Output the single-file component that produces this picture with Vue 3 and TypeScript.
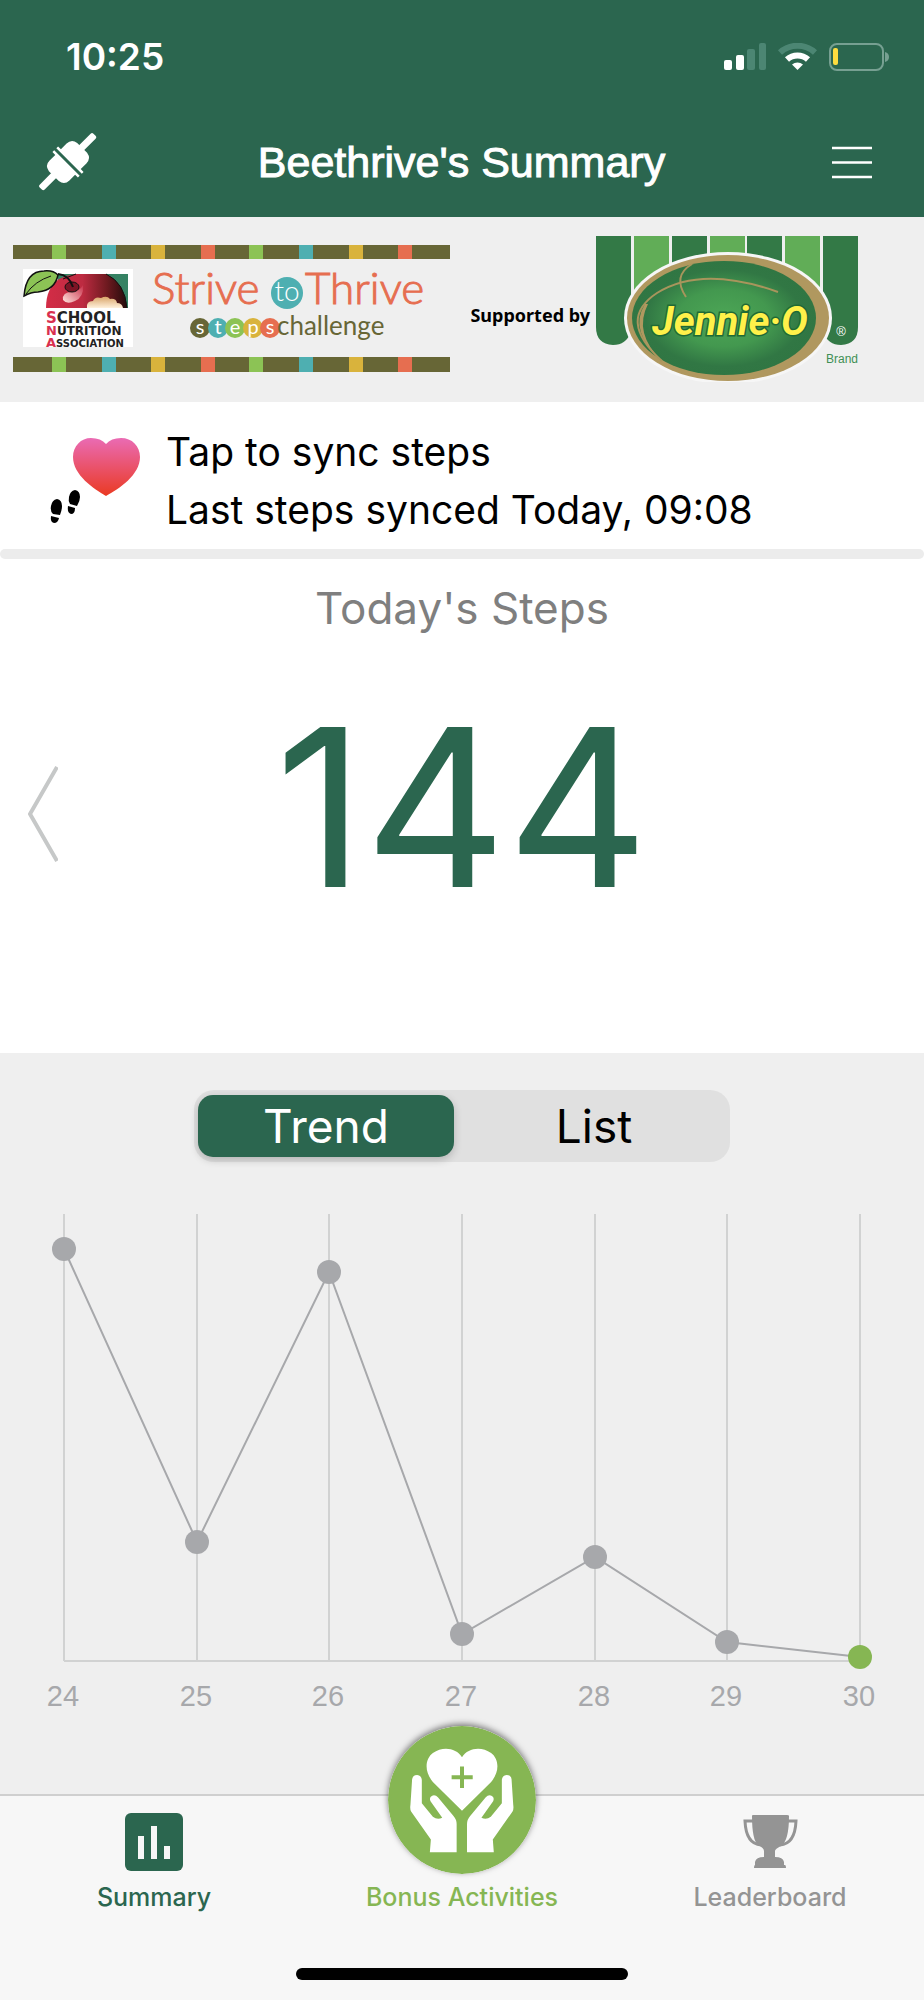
<script setup lang="ts">
import { computed, ref } from 'vue'

interface Day {
  label: string
  level: number
}

const view = ref<'trend' | 'list'>('trend')

const days: Day[] = [
  { label: '24', level: 412 },
  { label: '25', level: 119 },
  { label: '26', level: 389 },
  { label: '27', level: 27 },
  { label: '28', level: 104 },
  { label: '29', level: 19 },
  { label: '30', level: 4 },
]

const axisY = 461
const points = computed(() =>
  days.map((d, i) => ({
    label: d.label,
    x: 64 + Math.round((i * 796) / (days.length - 1)),
    y: axisY - d.level,
    today: i === days.length - 1,
  })),
)
const trendLine = computed(() => points.value.map((p) => `${p.x},${p.y}`).join(' '))

const stripes = [
  { x: 39, color: '#8cc355' },
  { x: 89, color: '#4eafb1' },
  { x: 138, color: '#d9b33c' },
  { x: 188, color: '#e66e50' },
  { x: 236, color: '#8cc355' },
  { x: 286, color: '#4eafb1' },
  { x: 336, color: '#d9b33c' },
  { x: 385, color: '#e66e50' },
]

const stepLetters = [
  { c: 's', x: 187, color: '#676636' },
  { c: 't', x: 205, color: '#4eafb1' },
  { c: 'e', x: 222, color: '#8cc355' },
  { c: 'p', x: 240, color: '#d9b33c' },
  { c: 's', x: 257, color: '#e66e50' },
]

const awning = [38, 76, 114, 151, 189]
</script>

<template>
  <div class="page">
    <header class="header">
      <div class="status">
        <span class="time">10:25</span>
        <svg class="status-icons" viewBox="0 0 166 28" role="img" aria-label="Signal, Wi-Fi, battery">
          <rect x="0" y="17" width="8" height="10" rx="2" fill="#fff" />
          <rect x="12" y="12" width="8" height="15" rx="2" fill="#fff" />
          <rect x="23" y="6" width="8" height="21" rx="2" fill="#4c8673" />
          <rect x="35" y="0" width="7" height="27" rx="2" fill="#4c8673" />
          <path d="M56 9.500a26 26 0 0 1 35 0" fill="none" stroke="#4c8673" stroke-width="6" />
          <path d="M63 16.500a15.500 15.500 0 0 1 21 0" fill="none" stroke="#fff" stroke-width="6" />
          <path d="M73.500 27l-5.500-5.500a8.500 8.500 0 0 1 11 0z" fill="#fff" />
          <rect x="106" y="1" width="53" height="26" rx="7" fill="none" stroke="#77a092" stroke-width="2" />
          <rect x="109" y="5" width="5" height="17" rx="2" fill="#fddc3f" />
          <path d="M161 9q4 1 4 5t-4 5z" fill="#77a092" />
        </svg>
      </div>
      <div class="title-row">
        <button class="icon-button" type="button" aria-label="Connections">
          <svg class="plug" viewBox="0 0 58 58">
            <g transform="rotate(45 29 29)" fill="#fff">
              <rect x="25" y="-9" width="7" height="20" rx="2" />
              <rect x="25" y="47" width="7" height="20" rx="2" />
              <path d="M15 25V17q0-7 7-8h14q7 1 7 8v8h4v2.500H11V25z" />
              <path d="M11 30.500h36V33h-4v8q0 7-7 8H22q-7-1-7-8v-8h-4z" />
            </g>
          </svg>
        </button>
        <h1 class="title">Beethrive's Summary</h1>
        <button class="icon-button end" type="button" aria-label="Menu">
          <svg class="menu" viewBox="0 0 40 34">
            <path d="M0 3h40M0 17.500h40M0 32h40" stroke="#fff" stroke-width="2.500" />
          </svg>
        </button>
      </div>
    </header>

    <section class="banner" aria-label="Sponsors">
      <svg class="strive" viewBox="0 0 437 128">
        <defs>
          <linearGradient id="apple" x1="0" x2="1">
            <stop offset="0" stop-color="#d32c46" />
            <stop offset=".45" stop-color="#bd2b41" />
            <stop offset=".75" stop-color="#6f1a20" />
            <stop offset="1" stop-color="#240c0c" />
          </linearGradient>
          <linearGradient id="shine" x1="1" y1="0" x2="0" y2="1">
            <stop offset="0" stop-color="#c8304a" />
            <stop offset="1" stop-color="#ffe3dd" />
          </linearGradient>
          <linearGradient id="bite" x1="0" y1="0" x2="0" y2="1">
            <stop offset="0" stop-color="#d9a468" />
            <stop offset="1" stop-color="#fff1dc" />
          </linearGradient>
        </defs>
        <rect width="437" height="14" fill="#676636" />
        <rect y="112" width="437" height="15" fill="#676636" />
        <g v-for="s in stripes" :key="s.x" :fill="s.color">
          <rect :x="s.x" width="14" height="14" />
          <rect :x="s.x" y="112" width="14" height="15" />
        </g>
        <rect x="10" y="24" width="110" height="78" fill="#fff" />
        <rect x="45" y="29" width="70" height="34" fill="#358263" />
        <path d="M33 63q0-20 13-29q8-4 17-5h30q19 9 21 34z" fill="url(#apple)" />
        <path d="M50 34l13-5M93 29q19 9 21 34" fill="none" stroke="#111" stroke-width="1" />
        <path d="M50 55q-1-8 9-8q8-1 11-7q1 12-8 16q-8 4-12-1z" fill="url(#shine)" />
        <ellipse cx="59" cy="42" rx="7" ry="5" fill="#7c1425" stroke="#111" stroke-width="1" />
        <path d="M45 29q11 1 15 13" fill="none" stroke="#111" stroke-width="2" />
        <path d="M74 63q-1-7 6-7q2-5 8-3q6-3 9 1q6-1 7 4q5 0 6 5z" fill="url(#bite)" />
        <path d="M11 51q2-25 20-25q9-1 14 4q-3 15-20 17q-7 0-14 4z" fill="#8cc355" stroke="#111" stroke-width="1.500" />
        <path d="M13 49q9-13 25-18" fill="none" stroke="#111" stroke-width="1" />
        <g class="sna">
          <text x="33" y="78" font-size="15"><tspan class="initial">S</tspan>CHOOL</text>
          <text x="33" y="90" font-size="12"><tspan class="initial" font-size="13">N</tspan>UTRITION</text>
          <text x="33" y="102" font-size="10"><tspan class="initial" font-size="13">A</tspan>SSOCIATION</text>
        </g>
        <text class="light" x="139" y="59" font-size="44">Strive</text>
        <text class="light" x="292" y="59" font-size="44">Thrive</text>
        <circle cx="274" cy="48" r="16" fill="#4eafb1" />
        <text class="to" x="274" y="56">to</text>
        <circle v-for="s in stepLetters" :key="s.x" :cx="s.x" cy="83" r="10" :fill="s.color" />
        <text v-for="s in stepLetters" :key="s.x + s.c" class="step-letter" :x="s.x" y="89">{{ s.c }}</text>
        <text class="challenge" x="264" y="90">challenge</text>
      </svg>
      <span class="supported">Supported by</span>
      <svg class="jennie" viewBox="0 0 263 146">
        <defs>
          <radialGradient id="field">
            <stop offset="0" stop-color="#4da656" />
            <stop offset=".5" stop-color="#43984f" />
            <stop offset=".85" stop-color="#317744" />
            <stop offset="1" stop-color="#307643" />
          </radialGradient>
        </defs>
        <path d="M0 0h35v96q-5 13-18 13q-17-1-17-18z" fill="#337946" />
        <path d="M227 0h35v91q0 17-17 18q-13 0-18-13z" fill="#337946" />
        <rect
          v-for="(x, i) in awning"
          :key="x"
          :x="x"
          width="35"
          height="60"
          :fill="i % 2 ? '#337946' : '#61ad57'"
        />
        <ellipse cx="132" cy="82" rx="104" ry="66" fill="#f6f6f6" />
        <ellipse cx="132" cy="82" rx="101" ry="63" fill="#b0985f" />
        <ellipse cx="128" cy="82" rx="92" ry="57" fill="url(#field)" />
        <path d="M66 125q-46-41-5-68q45-28 121-1" fill="none" stroke="#a8955c" stroke-width="2" />
        <path d="M66 125q-34-30-17-57l3 0q-15 29 14 57z" fill="#b0985f" />
        <path d="M96 28q-20 12-6 33" fill="none" stroke="#a8955c" stroke-width="2" />
        <text class="jennie-text" x="56" y="99">Jennie·O</text>
        <text class="reg" x="245" y="100">®</text>
        <text class="brand" x="230" y="127">Brand</text>
      </svg>
    </section>

    <button class="sync" type="button">
      <svg class="sync-icon" viewBox="0 0 94 92">
        <defs>
          <linearGradient id="heart" x1="0" x2="0" y1="0" y2="1">
            <stop offset="0" stop-color="#ea6bb4" />
            <stop offset="1" stop-color="#ea3a23" />
          </linearGradient>
        </defs>
        <path d="M58 61C46 54 25 40 25 22C25 11 33 3 43 3Q53 3 58 9Q63 3 73 3C84 3 92 11 92 22C92 40 71 54 58 61z" fill="url(#heart)" />
        <g>
          <path d="M9 64q5 1 5 7q0 4-2 9l-7-1q-3-3-2-8q1-6 6-7z" />
          <path d="M3 81l8 2q-1 5-5 5q-4-1-3-7z" />
          <path d="M27 55q5 1 5 7q0 4-3 9l-7-2q-2-3-1-7q1-6 6-7z" />
          <path d="M20 71l7 2q0 6-4 6q-4-1-3-8z" />
        </g>
      </svg>
      <span class="sync-text">
        <span>Tap to sync steps</span>
        <span>Last steps synced Today, 09:08</span>
      </span>
    </button>
    <div class="divider"></div>

    <main>
      <section class="today">
        <h2 class="today-label">Today's Steps</h2>
        <div class="count-row">
          <button class="previous" type="button" aria-label="Previous day">
            <svg viewBox="0 0 30 96">
              <path d="M29 1L2 48L29 95" fill="none" stroke="#c6c8c8" stroke-width="4" />
            </svg>
          </button>
          <strong class="count">144</strong>
        </div>
      </section>

      <section class="trend">
        <div class="segments" role="group" aria-label="View">
          <button type="button" :class="{ active: view === 'trend' }" @click="view = 'trend'">Trend</button>
          <button type="button" :class="{ active: view === 'list' }" @click="view = 'list'">List</button>
        </div>
        <svg class="chart" viewBox="0 0 924 520" role="img" aria-label="Steps per day">
          <g stroke="#d1d2d2" stroke-width="2">
            <line v-for="p in points" :key="p.label" :x1="p.x" :x2="p.x" y1="14" :y2="axisY" />
            <line x1="64" x2="860" :y1="axisY" :y2="axisY" />
          </g>
          <polyline :points="trendLine" fill="none" stroke="#a7a8ab" stroke-width="2" />
          <g v-for="p in points" :key="p.label">
            <circle :cx="p.x" :cy="p.y" r="12" :fill="p.today ? '#86b653' : '#a7a8ab'" />
            <text class="day" :x="p.x - 1" y="506">{{ p.label }}</text>
          </g>
        </svg>
      </section>
    </main>

    <nav class="tabbar">
      <div class="tabs">
        <a class="tab summary" href="#summary" aria-current="page">
          <svg class="tab-icon" viewBox="0 0 58 58">
            <rect width="58" height="58" rx="6" fill="#2b664f" />
            <path d="M13 23h6v23h-6zM26 13h6v33h-6zM39 33h6v13h-6z" fill="#f7f7f7" />
          </svg>
          <span>Summary</span>
        </a>
        <a class="tab bonus" href="#bonus">
          <span class="tab-icon"></span>
          <span>Bonus Activities</span>
          <svg class="bonus-icon" viewBox="86 79 442 442">
            <circle cx="307" cy="300" r="221" fill="#86b653" />
            <path d="M307 332L220 246C194 216 196 178 220 160C250 138 290 145 307 172C324 145 364 138 394 160C418 178 420 216 394 246z" fill="#fff" />
            <path d="M276 232h63M307 200v64" stroke="#86b653" stroke-width="12" />
            <g fill="#fff">
              <path id="hand" d="M158 238Q160 225 173 225Q186 227 187 240V310L220 350Q233 360 248 353L213 304Q208 291 218 287Q228 284 235 292L281 347Q291 358 291 372V456H211L214 418L155 334Q151 328 153 314z" />
              <use href="#hand" transform="translate(613 0) scale(-1 1)" />
            </g>
          </svg>
        </a>
        <a class="tab" href="#leaderboard">
          <svg class="tab-icon" viewBox="0 0 58 58">
            <path d="M11 3q0-1 1-1h34q2 0 2 1q0 25-8 30q-6 3-6 5v6q8 0 9 5v3h1q1 0 1 3H13q0-3 1-3v-3q1-5 9-5v-6q0-3-6-6Q11 27 11 3z" fill="#949494" />
            <path d="M12 8H4q1 23 16 24M46 8h9q-1 23-16 24" fill="none" stroke="#949494" stroke-width="3" />
          </svg>
          <span>Leaderboard</span>
        </a>
      </div>
      <div class="home-indicator"></div>
    </nav>
  </div>
</template>

<style>
body {
  background: #f7f7f7;
}
</style>

<style scoped>
.page {
  display: flex;
  flex-direction: column;
  min-height: 100vh;
  background: #fff;
  color: #000;
  font-family: Inter, 'Liberation Sans', sans-serif;
}
button {
  padding: 0;
  border: 0;
  background: none;
  color: inherit;
  font: inherit;
  cursor: pointer;
}
svg {
  display: block;
}
h1,
h2 {
  margin: 0;
  font-weight: 400;
}
.header {
  padding: 35px 0 26px;
  background: #2b664f;
  color: #fff;
}
.status {
  display: flex;
  align-items: center;
  justify-content: space-between;
  padding: 0 34px 0 66px;
}
.time {
  font-size: 37px;
  font-weight: 600;
  line-height: 44px;
}
.status-icons {
  width: 166px;
}
.title-row {
  display: grid;
  grid-template-columns: 60px 1fr 60px;
  align-items: center;
  margin-top: 54px;
  padding: 0 52px 0 39px;
}
.title {
  padding-left: 12px;
  font-family: 'Liberation Sans', Arial, sans-serif;
  font-size: 43px;
  line-height: 56px;
  text-align: center;
  -webkit-text-stroke: 1px #fff;
}
.plug {
  width: 58px;
}
.menu {
  width: 40px;
  margin-left: auto;
}
.banner {
  display: flex;
  align-items: center;
  padding: 19px 13px 20px;
  background: #efefef;
}
.strive {
  width: 437px;
}
.sna {
  font-family: 'DejaVu Sans', sans-serif;
  font-weight: 700;
  fill: #222;
}
.initial {
  fill: #d9304f;
}
.light {
  font-family: Lato, sans-serif;
  font-weight: 300;
  fill: #e66e50;
  stroke: #e66e50;
  stroke-width: 1px;
}
.to {
  font-family: Lato, sans-serif;
  font-size: 28px;
  font-weight: 300;
  fill: #fff;
  text-anchor: middle;
}
.step-letter {
  font-family: Lato, sans-serif;
  font-size: 20px;
  fill: #fff;
  text-anchor: middle;
}
.challenge {
  font-family: Lato, sans-serif;
  font-size: 26px;
  fill: #676636;
}
.supported {
  box-sizing: border-box;
  width: 146px;
  padding: 12px 6px 0 0;
  font-family: 'Noto Sans', sans-serif;
  font-size: 18px;
  font-weight: 700;
  line-height: 24px;
  text-align: right;
  white-space: nowrap;
}
.jennie {
  width: 263px;
}
.jennie-text {
  font-family: Roboto, sans-serif;
  font-size: 40px;
  font-style: italic;
  font-weight: 700;
  fill: #fff14a;
  stroke: #1f6a35;
  stroke-width: 3px;
  paint-order: stroke;
}
.reg {
  font-family: 'Liberation Sans', sans-serif;
  font-size: 13px;
  fill: #fff;
  text-anchor: middle;
}
.brand {
  font-family: 'Liberation Sans', sans-serif;
  font-size: 12px;
  fill: #3f8f55;
}
.sync {
  display: flex;
  align-items: center;
  gap: 24px;
  padding: 21px 48px 10px;
  text-align: left;
}
.sync-icon {
  width: 94px;
}
.sync-text {
  display: flex;
  flex-direction: column;
  font-size: 39px;
  line-height: 58px;
}
.divider {
  height: 10px;
  border-radius: 5px;
  background: #ececec;
}
main {
  display: flex;
  flex: 1;
  flex-direction: column;
}
.today {
  padding: 19px 0 114px;
}
.today-label {
  color: #7f7f7f;
  font-size: 44px;
  line-height: 60px;
  text-align: center;
}
.count-row {
  display: grid;
  grid-template-columns: 58px 1fr 58px;
  align-items: center;
  margin-top: 51px;
}
.previous svg {
  width: 30px;
  margin-left: 28px;
}
.count {
  padding-bottom: 14px;
  color: #2b664f;
  font-size: 220px;
  font-weight: 400;
  line-height: 236px;
  text-align: center;
}
.trend {
  flex: 1;
  padding-top: 37px;
  background: #efefef;
}
.segments {
  display: grid;
  grid-template-columns: 1fr 1fr;
  box-sizing: border-box;
  width: 58%;
  margin: 0 auto 38px;
  padding: 5px 4px;
  border-radius: 20px;
  background: #e0e0e0;
}
.segments button {
  border-radius: 15px;
  font-size: 46px;
  line-height: 62px;
}
.segments .active {
  margin-right: 8px;
  background: #2b664f;
  box-shadow: 0 3px 8px rgba(0, 0, 0, 0.2);
  color: #fff;
}
.chart {
  width: 100%;
}
.day {
  font-family: 'Liberation Sans', Arial, sans-serif;
  font-size: 29px;
  fill: #a7a8ab;
  text-anchor: middle;
}
.tabbar {
  padding-bottom: 20px;
  border-top: 2px solid #cfcfcf;
  background: #f7f7f7;
}
.tabs {
  display: grid;
  grid-template-columns: repeat(3, 1fr);
}
.tab {
  position: relative;
  display: flex;
  flex-direction: column;
  align-items: center;
  gap: 11px;
  padding-top: 17px;
  color: #949494;
  font-size: 25px;
  font-weight: 500;
  line-height: 30px;
  text-decoration: none;
}
.summary {
  color: #2b664f;
}
.bonus {
  color: #86b653;
}
.tab-icon {
  width: 58px;
  height: 58px;
}
.bonus-icon {
  position: absolute;
  top: -70px;
  width: 148px;
  border-radius: 50%;
  box-shadow: 0 -2px 6px rgba(0, 0, 0, 0.5);
}
.home-indicator {
  width: 36%;
  height: 12px;
  margin: 56px auto 0;
  border-radius: 6px;
  background: #000;
}
</style>
